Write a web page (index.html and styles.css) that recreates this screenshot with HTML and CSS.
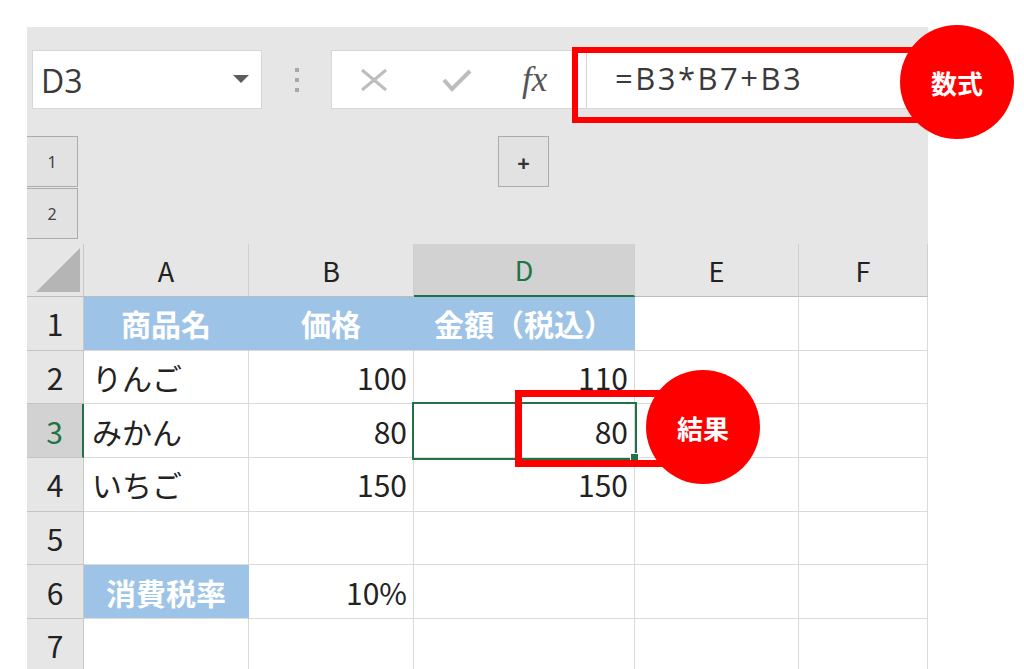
FILE: index.html
```html
<!DOCTYPE html>
<html lang="ja">
<head>
    <meta charset="UTF-8">
    <title>数式と結果</title>
    <link rel="stylesheet" href="styles.css">
</head>
<body>
    <div class="sheet">
        <div class="formula-bar">
            <div class="name-box">
                <span>D3</span>
                <span class="drop"></span>
            </div>
            <div class="grip"><i></i><i></i><i></i></div>
            <div class="fx-buttons">
                <svg class="icon-x" width="28" height="24" viewBox="0 0 28 24">
                    <path d="M2 2 L26 22 M26 2 L2 22" stroke="#bdbdbd" stroke-width="3" fill="none"/>
                </svg>
                <svg class="icon-ok" width="30" height="24" viewBox="0 0 30 24">
                    <polyline points="2,12 10,21 28,3" stroke="#bdbdbd" stroke-width="4" fill="none"/>
                </svg>
                <span class="fx">fx</span>
            </div>
            <div class="formula-input">=B3*B7+B3</div>
        </div>

        <div class="outline">
            <div class="outline-row">
                <div class="level">1</div>
                <div class="toggle">+</div>
            </div>
            <div class="outline-row">
                <div class="level">2</div>
            </div>
        </div>

        <div class="grid">
            <div class="corner">
                <svg width="44" height="44" viewBox="0 0 44 44"><polygon points="44,0 44,44 0,44" fill="#b5b5b5"/></svg>
            </div>
            <div class="col-head">A</div>
            <div class="col-head">B</div>
            <div class="col-head selected">D</div>
            <div class="col-head">E</div>
            <div class="col-head">F</div>

            <div class="row-head">1</div>
            <div class="cell title">商品名</div>
            <div class="cell title">価格</div>
            <div class="cell title">金額（税込）</div>
            <div class="cell"></div>
            <div class="cell"></div>

            <div class="row-head">2</div>
            <div class="cell">りんご</div>
            <div class="cell num">100</div>
            <div class="cell num">110</div>
            <div class="cell"></div>
            <div class="cell"></div>

            <div class="row-head selected">3</div>
            <div class="cell">みかん</div>
            <div class="cell num">80</div>
            <div class="cell num active">80</div>
            <div class="cell"></div>
            <div class="cell"></div>

            <div class="row-head">4</div>
            <div class="cell">いちご</div>
            <div class="cell num">150</div>
            <div class="cell num">150</div>
            <div class="cell"></div>
            <div class="cell"></div>

            <div class="row-head">5</div>
            <div class="cell"></div>
            <div class="cell"></div>
            <div class="cell"></div>
            <div class="cell"></div>
            <div class="cell"></div>

            <div class="row-head">6</div>
            <div class="cell title">消費税率</div>
            <div class="cell num">10%</div>
            <div class="cell"></div>
            <div class="cell"></div>
            <div class="cell"></div>

            <div class="row-head">7</div>
            <div class="cell"></div>
            <div class="cell"></div>
            <div class="cell"></div>
            <div class="cell"></div>
            <div class="cell"></div>
        </div>

        <!-- 注釈 -->
        <div class="mark mark-formula"></div>
        <div class="badge badge-formula">数式</div>
        <div class="mark mark-result"></div>
        <div class="badge badge-result">結果</div>
    </div>
</body>
</html>
```

FILE: styles.css
```css
body {
    margin: 0;
    background: #fff;
    font-family: "Noto Sans CJK JP", sans-serif;
}
.sheet {
    position: relative;
    margin: 27px 0 0 27px;
    width: 901px;
    background: #e6e6e6;
}

/* 数式バー */
.formula-bar {
    display: flex;
    align-items: flex-start;
    height: 82px;
    padding-top: 23px;
    box-sizing: border-box;
    overflow: hidden;
}
.name-box {
    display: flex;
    align-items: center;
    justify-content: space-between;
    margin-left: 5px;
    width: 230px;
    height: 59px;
    box-sizing: border-box;
    padding: 2px 12px 0 8px;
    background: #fff;
    border: 1px solid #d6d6d6;
    font-family: "Open Sans", sans-serif;
    font-size: 32px;
    color: #3a3a3a;
}
.drop {
    width: 0;
    height: 0;
    margin-bottom: 4px;
    border-left: 8px solid transparent;
    border-right: 8px solid transparent;
    border-top: 8px solid #5c5c5c;
}
.grip {
    width: 69px;
    height: 59px;
    display: flex;
    flex-direction: column;
    align-items: center;
    justify-content: center;
    gap: 6px;
}
.grip i {
    width: 4px;
    height: 4px;
    background: #a8a8a8;
}
.fx-buttons {
    display: flex;
    align-items: center;
    width: 255px;
    height: 59px;
    box-sizing: border-box;
    background: #fff;
    border: 1px solid #d6d6d6;
    border-right: none;
}
.icon-x {
    margin-left: 28px;
}
.icon-ok {
    margin-left: 54px;
}
.fx {
    margin-left: 50px;
    font-family: "Liberation Serif", serif;
    font-style: italic;
    font-size: 35px;
    color: #555;
}
.formula-input {
    flex: 1;
    height: 59px;
    box-sizing: border-box;
    padding-left: 28px;
    background: #fff;
    border: 1px solid #d6d6d6;
    font-family: "Open Sans", sans-serif;
    font-size: 31px;
    letter-spacing: 2.5px;
    line-height: 55px;
    color: #3a3a3a;
}

/* アウトライン */
.outline {
    height: 135px;
    padding-top: 27px;
    box-sizing: border-box;
}
.outline-row {
    display: flex;
    height: 52px;
}
.level, .toggle {
    width: 51px;
    height: 51px;
    box-sizing: border-box;
    display: flex;
    align-items: center;
    justify-content: center;
    background: #e2e2e2;
    border: 1px solid #ababab;
    font-family: "Noto Sans", sans-serif;
    font-size: 16px;
    color: #444;
}
.level {
    border-left: none;
}
.toggle {
    margin-left: 420px;
    font-size: 22px;
    font-weight: bold;
    color: #333;
}

/* シート */
.grid {
    display: grid;
    grid-template-columns: 57px 165px 165px 221px 164px 129px;
    grid-template-rows: 53px repeat(7, 53.7px);
}
.corner {
    display: flex;
    align-items: flex-end;
    justify-content: flex-end;
    padding: 0 3px 4px 0;
    border-right: 1px solid #c8c8c8;
    border-bottom: 1px solid #bcbcbc;
}
.col-head {
    display: flex;
    align-items: center;
    justify-content: center;
    border-right: 1px solid #cfcfcf;
    border-bottom: 1px solid #bcbcbc;
    font-size: 27px;
    color: #222;
}
.col-head.selected {
    background: #d2d2d2;
    color: #217346;
    border-bottom: 2px solid #217346;
}
.row-head {
    display: flex;
    align-items: center;
    justify-content: center;
    background: #e6e6e6;
    border-right: 1px solid #c8c8c8;
    border-bottom: 1px solid #c4c4c4;
    font-size: 30px;
    line-height: 1;
    color: #222;
}
.row-head.selected {
    background: #d2d2d2;
    color: #217346;
    border-right: 2px solid #217346;
}
.cell {
    display: flex;
    align-items: center;
    padding: 0 8px;
    background: #fff;
    border-right: 1px solid #dadada;
    border-bottom: 1px solid #dadada;
    font-size: 30px;
    line-height: 1;
    color: #222;
    white-space: nowrap;
}
.cell.num {
    justify-content: flex-end;
    padding-right: 6px;
}
.cell.title {
    justify-content: center;
    background: #9dc3e6;
    border-right-color: #9dc3e6;
    color: #fff;
    font-weight: bold;
}
.cell.active {
    position: relative;
    z-index: 1;
    outline: 2px solid #217346;
    outline-offset: 0;
}
.cell.active::after {
    content: "";
    position: absolute;
    right: -5px;
    bottom: -5px;
    width: 7px;
    height: 7px;
    background: #217346;
    border: 1px solid #fff;
}

/* 注釈 */
.mark {
    position: absolute;
    border: 6px solid #ff0000;
    z-index: 2;
}
.mark-formula {
    left: 545px;
    top: 20px;
    width: 360px;
    height: 64px;
}
.mark-result {
    left: 488px;
    top: 363px;
    width: 140px;
    height: 63px;
    border-width: 7px;
}
.badge {
    position: absolute;
    width: 114px;
    height: 114px;
    border-radius: 50%;
    background: #ff0000;
    color: #fff;
    display: flex;
    align-items: center;
    justify-content: center;
    font-size: 26px;
    font-weight: bold;
    z-index: 3;
}
.badge-formula {
    left: 873px;
    top: -2px;
}
.badge-result {
    left: 619px;
    top: 343px;
}
```
